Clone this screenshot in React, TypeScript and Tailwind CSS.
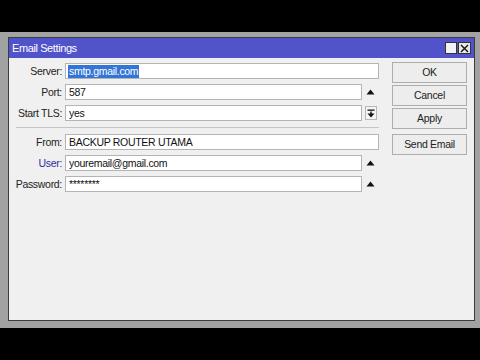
import React from "react";

const font = { fontFamily: '"Liberation Sans", Arial, sans-serif' };

function Up() {
  return (
    <div className="w-[17px] h-4 flex items-center justify-center">
      <svg width="9" height="6" viewBox="0 0 9 6">
        <polygon points="4.5,0.5 8.5,5.5 0.5,5.5" fill="#111" />
      </svg>
    </div>
  );
}

function DropBtn() {
  return (
    <div className="w-[17px] h-4 flex items-center justify-center">
      <div className="w-[12px] h-[14px] border border-[#b8b8b8] bg-[#f4f4f4] flex items-center justify-center">
        <svg width="8" height="9" viewBox="0 0 8 9">
          <rect x="0.5" y="0.5" width="7" height="1.3" fill="#111" />
          <rect x="3.3" y="2.5" width="1.4" height="3" fill="#111" />
          <polygon points="0.5,4.5 7.5,4.5 4,8.5" fill="#111" />
        </svg>
      </div>
    </div>
  );
}

function Row({
  label,
  value,
  trail,
  labelClass = "text-[#222]",
  selected = false,
}: {
  label: string;
  value: string;
  trail?: React.ReactNode;
  labelClass?: string;
  selected?: boolean;
}) {
  return (
    <div className="flex items-center h-4">
      <div className={`w-[53px] text-right text-[10.5px] tracking-[-0.3px] leading-4 whitespace-nowrap ${labelClass}`}>{label}</div>
      <div className="w-[3px]" />
      <div className={`h-4 bg-white border border-[#b4b4b4] flex items-center pl-[2px] ${trail ? "w-[297px]" : "w-[314px]"}`}>
        {selected ? (
          <span className="bg-[#3275d6] text-white text-[10.5px] tracking-[-0.3px] leading-[13px] px-[1px]">{value}</span>
        ) : (
          <span className="text-[#111] text-[10.5px] tracking-[-0.3px] leading-[13px] px-[1px]">{value}</span>
        )}
      </div>
      {trail}
    </div>
  );
}

function Btn({ children, mt = "" }: { children: React.ReactNode; mt?: string }) {
  return (
    <div
      className={`h-[21px] w-[75px] border border-[#adadad] bg-[#ededed] flex items-center justify-center text-[10.5px] tracking-[-0.3px] text-[#222] ${mt}`}
    >
      {children}
    </div>
  );
}

export default function App() {
  return (
    <div className="w-[480px] h-[360px] bg-black flex flex-col" style={font}>
      <div className="h-[32px]" />
      <div className="h-[296px] bg-[#a2a2a2] pl-[8px] pt-[5px]">
        <div className="w-[467px] h-[284px] border border-[#3c3c3c] bg-[#f0f0f0] flex flex-col">
          <div className="h-[20px] bg-[#5053c9] flex items-center pl-[3px] pr-[3px]">
            <span className="text-white text-[11px] tracking-[-0.4px] leading-none">Email Settings</span>
            <div className="flex-1" />
            <div className="w-[12px] h-[12px] bg-[#f2f2f2] border border-[#333] mr-[1px]" />
            <div className="w-[13px] h-[12px] bg-[#e8e8e8] border border-[#333] flex items-center justify-center">
              <svg width="9" height="9" viewBox="0 0 9 9">
                <path d="M1 1 L8 8 M8 1 L1 8" stroke="#111" strokeWidth="1.4" />
              </svg>
            </div>
          </div>
          <div className="flex flex-1">
            <div className="w-[370px] pt-[5px] flex flex-col">
              <Row label="Server:" value="smtp.gmail.com" selected />
              <div className="h-[5px]" />
              <Row label="Port:" value="587" trail={<Up />} />
              <div className="h-[5px]" />
              <Row label="Start TLS:" value="yes" trail={<DropBtn />} />
              <div className="h-[6px]" />
              <div className="ml-[7px] w-[363px] h-[1px] bg-[#c4c4c4]" />
              <div className="h-[6px]" />
              <Row label="From:" value="BACKUP ROUTER UTAMA" />
              <div className="h-[5px]" />
              <Row label="User:" value="youremail@gmail.com" labelClass="text-[#2c2c9c]" trail={<Up />} />
              <div className="h-[5px]" />
              <Row label="Password:" value="********" trail={<Up />} />
            </div>
            <div className="ml-[13px] pt-[4px] flex flex-col">
              <Btn>OK</Btn>
              <Btn mt="mt-[2px]">Cancel</Btn>
              <Btn mt="mt-[2px]">Apply</Btn>
              <Btn mt="mt-[5px]">Send Email</Btn>
            </div>
          </div>
        </div>
      </div>
      <div className="flex-1" />
    </div>
  );
}
